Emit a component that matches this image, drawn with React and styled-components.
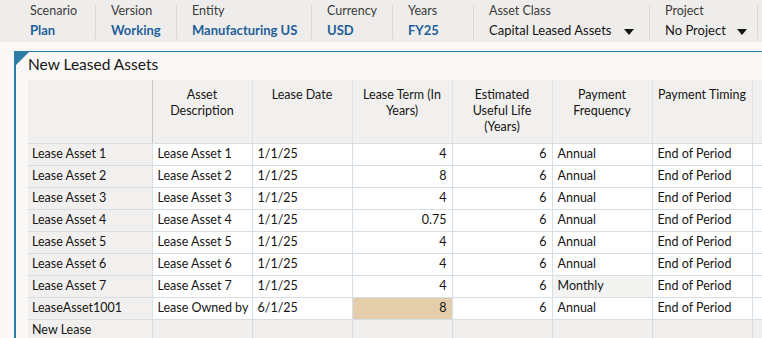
import React from 'react'
import styled, { createGlobalStyle } from 'styled-components'

const GlobalStyle = createGlobalStyle`
  html, body {
    margin:0;
    padding:0;
    background:#f9f8f7;
    font-family:Lato, "Noto Sans", "Liberation Sans", sans-serif;
    color:#161513;
  }
`

const Page = styled.div`
  width:762px;
  height:338px;
  overflow:hidden;
  background:#f9f8f7;
`

const PovBar = styled.div`
  display:flex;
  height:42px;
  background:#eeedec;
  padding-left:15px;
  box-sizing:border-box;
`

const PovItem = styled.div`
  width:${p => p.w}px;
  flex:none;
  padding:3px ${p => p.pr || 15}px 0 15px;
  box-sizing:border-box;
  display:flex;
  flex-direction:column;
`

const Separator = styled.div`
  width:1px;
  height:34px;
  margin-top:5px;
  background:#d9d8d6;
  flex:none;
`

const PovLabel = styled.div`
  font-size:12.5px;
  line-height:16px;
  color:#3c3b39;
`

const PovValue = styled.div`
  margin-top:3px;
  font-size:13px;
  line-height:16px;
  font-weight:${p => (p.select ? 400 : 700)};
  color:${p => (p.select ? '#161513' : '#1f5f99')};
  display:flex;
  justify-content:space-between;
  align-items:center;
  white-space:nowrap;
`

const Caret = styled.span`
  width:0;
  height:0;
  border-left:5px solid transparent;
  border-right:5px solid transparent;
  border-top:6px solid #161513;
  margin-top:3px;
`

const Panel = styled.div`
  position:relative;
  margin:9px 0 0 14px;
  border-top:1px solid #2d7ca5;
  border-left:2px solid #2d7ca5;
  padding-left:12px;
`

const Corner = styled.div`
  position:absolute;
  top:0;
  left:0;
  width:0;
  height:0;
  border-top:13px solid #2d7ca5;
  border-right:13px solid transparent;
`

const Title = styled.div`
  height:28px;
  font-size:15.5px;
  line-height:24px;
  color:#161513;
`

const Grid = styled.table`
  border-collapse:collapse;
  table-layout:fixed;
  width:800px;
  font-size:12.5px;
`

const Head = styled.th`
  background:#f1f0ef;
  font-weight:400;
  text-align:center;
  vertical-align:top;
  height:63px;
  padding:7px 4px 0;
  line-height:16px;
  box-sizing:border-box;
  border-right:1px solid ${p => (p.corner ? '#c9c8c6' : '#dfe3e7')};
  border-bottom:1px solid #d6dee6;
`

const RowHead = styled.td`
  background:#f1f0ef;
  height:21px;
  padding:0 4px;
  line-height:20px;
  border-bottom:1px solid #d6dee6;
  border-right:1px solid #d6dee6;
  white-space:nowrap;
  overflow:hidden;
`

const Cell = styled.td`
  background:${p => p.bg || '#ffffff'};
  height:21px;
  padding:0 5px;
  line-height:20px;
  text-align:${p => (p.num ? 'right' : 'left')};
  border-bottom:1px solid #d6dee6;
  border-right:1px solid #d6dee6;
  white-space:nowrap;
  overflow:hidden;
`

const povs = [
  { label: 'Scenario', value: 'Plan', w: 80 },
  { label: 'Version', value: 'Working', w: 80 },
  { label: 'Entity', value: 'Manufacturing US', w: 134 },
  { label: 'Currency', value: 'USD', w: 80 },
  { label: 'Years', value: 'FY25', w: 80 },
  { label: 'Asset Class', value: 'Capital Leased Assets', w: 175, select: true },
  { label: 'Project', value: 'No Project', w: 107, select: true, pr: 10 },
]

const headers = [
  'Asset Description',
  'Lease Date',
  'Lease Term (In Years)',
  'Estimated Useful Life (Years)',
  'Payment Frequency',
  'Payment Timing',
  '',
]

const rows = [
  ['Lease Asset 1', 'Lease Asset 1', '1/1/25', '4', '6', 'Annual', 'End of Period'],
  ['Lease Asset 2', 'Lease Asset 2', '1/1/25', '8', '6', 'Annual', 'End of Period'],
  ['Lease Asset 3', 'Lease Asset 3', '1/1/25', '4', '6', 'Annual', 'End of Period'],
  ['Lease Asset 4', 'Lease Asset 4', '1/1/25', '0.75', '6', 'Annual', 'End of Period'],
  ['Lease Asset 5', 'Lease Asset 5', '1/1/25', '4', '6', 'Annual', 'End of Period'],
  ['Lease Asset 6', 'Lease Asset 6', '1/1/25', '4', '6', 'Annual', 'End of Period'],
  ['Lease Asset 7', 'Lease Asset 7', '1/1/25', '4', '6', 'Monthly', 'End of Period'],
  ['LeaseAsset1001', 'Lease Owned by', '6/1/25', '8', '6', 'Annual', 'End of Period'],
]

function App() {
  return (
    <Page>
      <GlobalStyle />
      <PovBar>
        {povs.map((p, i) => (
          <React.Fragment key={p.label}>
            {i > 0 && <Separator />}
            <PovItem w={p.w} pr={p.pr}>
              <PovLabel>{p.label}</PovLabel>
              <PovValue select={p.select}>
                {p.value}
                {p.select && <Caret />}
              </PovValue>
            </PovItem>
          </React.Fragment>
        ))}
        <Separator />
      </PovBar>

      <Panel>
        <Corner />
        <Title>New Leased Assets</Title>
        <Grid>
          <colgroup>
            <col style={{ width: 124 }} />
            {headers.map((h, i) => <col key={i} style={{ width: 100 }} />)}
          </colgroup>
          <thead>
            <tr>
              <Head corner />
              {headers.map((h, i) => <Head key={i}>{h}</Head>)}
            </tr>
          </thead>
          <tbody>
            {rows.map((r, ri) => (
              <tr key={r[0]}>
                <RowHead>{r[0]}</RowHead>
                <Cell>{r[1]}</Cell>
                <Cell>{r[2]}</Cell>
                <Cell num bg={ri === 7 ? '#e3cdab' : undefined}>{r[3]}</Cell>
                <Cell num>{r[4]}</Cell>
                <Cell bg={r[5] === 'Monthly' ? '#f3f4f2' : undefined}>{r[5]}</Cell>
                <Cell>{r[6]}</Cell>
                <Cell />
              </tr>
            ))}
            <tr>
              <RowHead>New Lease</RowHead>
              {headers.map((h, i) => <Cell key={i} bg="#f0efee" />)}
            </tr>
          </tbody>
        </Grid>
      </Panel>
    </Page>
  )
}

export default App
